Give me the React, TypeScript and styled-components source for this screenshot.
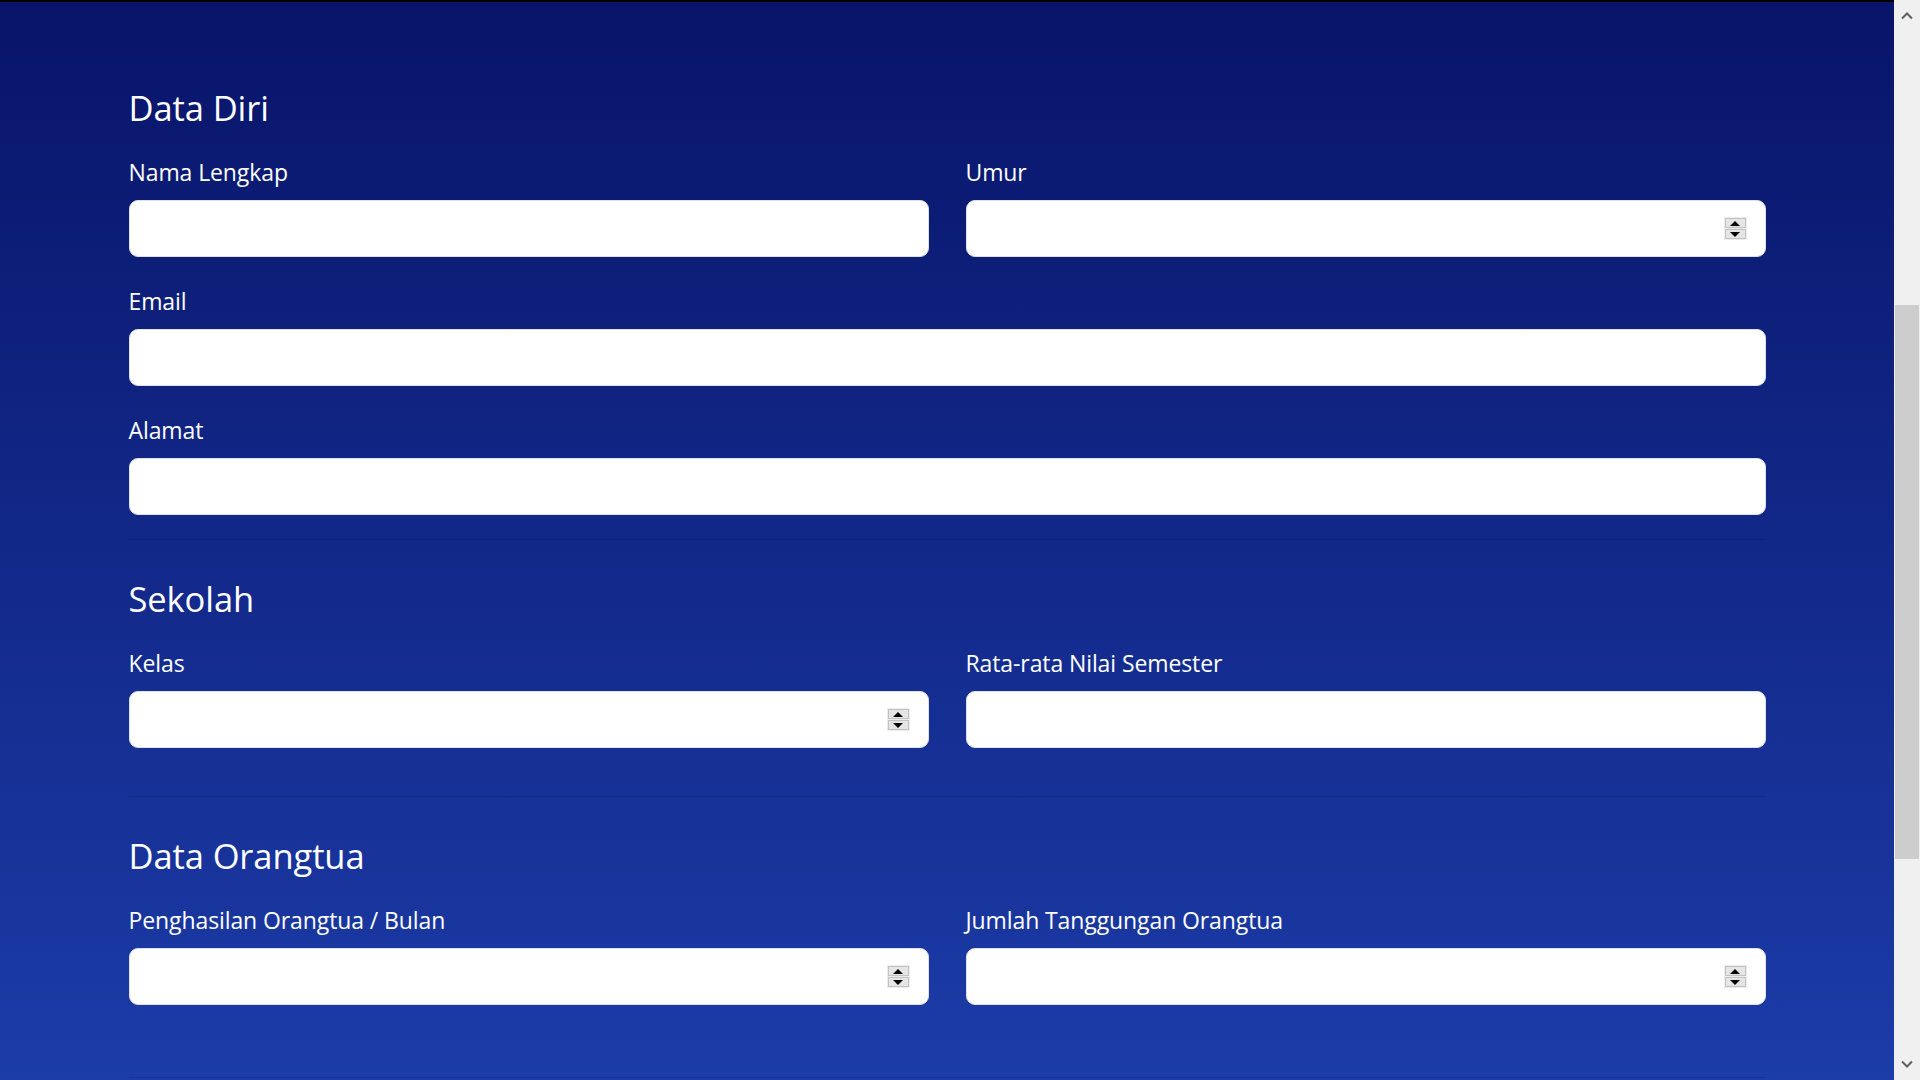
import React from "react";
import styled, { createGlobalStyle } from "styled-components";

const GlobalStyle = createGlobalStyle`
  html, body {
    margin: 0;
    padding: 0;
    height: 100%;
    overflow: hidden;
  }
  body {
    font-family: "Open Sans", "Noto Sans", sans-serif;
  }
  #root {
    height: 100%;
  }
`;

const Screen = styled.div`
  display: flex;
  width: 100vw;
  height: 100vh;
  overflow: hidden;
`;

const Page = styled.main`
  flex: 1;
  min-width: 0;
  display: flex;
  flex-direction: column;
  background: linear-gradient(180deg, #081469 0%, #1c3ca8 100%);
  color: #ffffff;
`;

const TopEdge = styled.div`
  flex: none;
  height: 2px;
  background: #000000;
`;

const Container = styled.form`
  width: 1637px;
  margin: 0 auto;
`;

const Section = styled.section<{ $top: number; $bottom: number }>`
  padding-top: ${(p) => p.$top}px;
  padding-bottom: ${(p) => p.$bottom}px;
`;

const SectionTitle = styled.h3`
  margin: 0 0 19px;
  font-size: 34.5px;
  line-height: 50px;
  font-weight: 400;
  letter-spacing: -0.1px;
`;

const FieldGrid = styled.div`
  display: grid;
  grid-template-columns: 1fr 1fr;
  column-gap: 37px;
  row-gap: 24px;
`;

const Field = styled.div<{ $wide?: boolean }>`
  grid-column: ${(p) => (p.$wide ? "1 / -1" : "auto")};
  display: flex;
  flex-direction: column;
`;

const Label = styled.label`
  font-size: 23px;
  line-height: 36px;
  letter-spacing: -0.1px;
  padding-top: 2px;
  margin-bottom: 10px;
`;

const InputBox = styled.div`
  height: 57px;
  box-sizing: border-box;
  background: #ffffff;
  border: 1px solid #dee2e6;
  border-radius: 9px;
  display: flex;
  align-items: center;
  padding: 0 18px;
`;

const TextInput = styled.input`
  flex: 1;
  min-width: 0;
  border: 0;
  outline: 0;
  padding: 0;
  background: transparent;
  font: inherit;
  font-size: 23px;
  color: #212529;
`;

const Spinner = styled.div`
  flex: none;
  width: 23px;
  height: 23px;
  box-sizing: border-box;
  display: flex;
  flex-direction: column;
  gap: 1px;
  padding: 1px;
  background: #ececec;
`;

const SpinButton = styled.div`
  flex: 1;
  border: 1px solid #c3c3c3;
  background: #e5e5e5;
  display: flex;
  align-items: center;
  justify-content: center;
`;

const Arrow = styled.span<{ $dir: "up" | "down" }>`
  width: 0;
  height: 0;
  border-left: 5px solid transparent;
  border-right: 5px solid transparent;
  ${(p) =>
    p.$dir === "up"
      ? "border-bottom: 5px solid #000;"
      : "border-top: 5px solid #000;"}
`;

const Divider = styled.hr`
  margin: 0;
  border: 0;
  border-top: 1px solid rgba(0, 0, 0, 0.13);
`;

const ScrollTrack = styled.div`
  flex: none;
  width: 26px;
  background: #f0f0f0;
  display: flex;
  flex-direction: column;
  align-items: center;
`;

const ScrollButton = styled.div`
  flex: none;
  width: 100%;
  height: 32px;
  display: flex;
  align-items: center;
  justify-content: center;
`;

const ScrollThumb = styled.div`
  flex: none;
  width: 24px;
  height: 554px;
  margin-top: 273px;
  background: #cdcdcd;
`;

const ScrollSpacer = styled.div`
  flex: 1;
`;

type FieldDef = { label: string; type: "text" | "number" | "email"; wide?: boolean };

type SectionDef = { title: string; top: number; bottom: number; fields: FieldDef[] };

const sections: SectionDef[] = [
  {
    title: "Data Diri",
    top: 81,
    bottom: 24,
    fields: [
      { label: "Nama Lengkap", type: "text" },
      { label: "Umur", type: "number" },
      { label: "Email", type: "email", wide: true },
      { label: "Alamat", type: "text", wide: true },
    ],
  },
  {
    title: "Sekolah",
    top: 34,
    bottom: 48,
    fields: [
      { label: "Kelas", type: "number" },
      { label: "Rata-rata Nilai Semester", type: "text" },
    ],
  },
  {
    title: "Data Orangtua",
    top: 34,
    bottom: 72,
    fields: [
      { label: "Penghasilan Orangtua / Bulan", type: "number" },
      { label: "Jumlah Tanggungan Orangtua", type: "number" },
    ],
  },
];

const Chevron = ({ down }: { down?: boolean }) => (
  <svg width="12" height="8" viewBox="0 0 12 8">
    <polyline
      points={down ? "1,1.5 6,6.5 11,1.5" : "1,6.5 6,1.5 11,6.5"}
      fill="none"
      stroke="#606060"
      strokeWidth="2"
    />
  </svg>
);

const InputField = ({ field, id }: { field: FieldDef; id: string }) => (
  <Field $wide={field.wide}>
    <Label htmlFor={id}>{field.label}</Label>
    <InputBox>
      <TextInput id={id} type={field.type === "email" ? "email" : "text"} />
      {field.type === "number" && (
        <Spinner>
          <SpinButton>
            <Arrow $dir="up" />
          </SpinButton>
          <SpinButton>
            <Arrow $dir="down" />
          </SpinButton>
        </Spinner>
      )}
    </InputBox>
  </Field>
);

export default function App() {
  return (
    <>
      <GlobalStyle />
      <Screen>
        <Page>
          <TopEdge />
          <Container onSubmit={(e) => e.preventDefault()}>
            {sections.map((s, si) => (
              <React.Fragment key={s.title}>
                <Section $top={s.top} $bottom={s.bottom}>
                  <SectionTitle>{s.title}</SectionTitle>
                  <FieldGrid>
                    {s.fields.map((f, fi) => (
                      <InputField key={f.label} field={f} id={`f-${si}-${fi}`} />
                    ))}
                  </FieldGrid>
                </Section>
                <Divider />
              </React.Fragment>
            ))}
          </Container>
        </Page>
        <ScrollTrack>
          <ScrollButton>
            <Chevron />
          </ScrollButton>
          <ScrollThumb />
          <ScrollSpacer />
          <ScrollButton>
            <Chevron down />
          </ScrollButton>
        </ScrollTrack>
      </Screen>
    </>
  );
}
